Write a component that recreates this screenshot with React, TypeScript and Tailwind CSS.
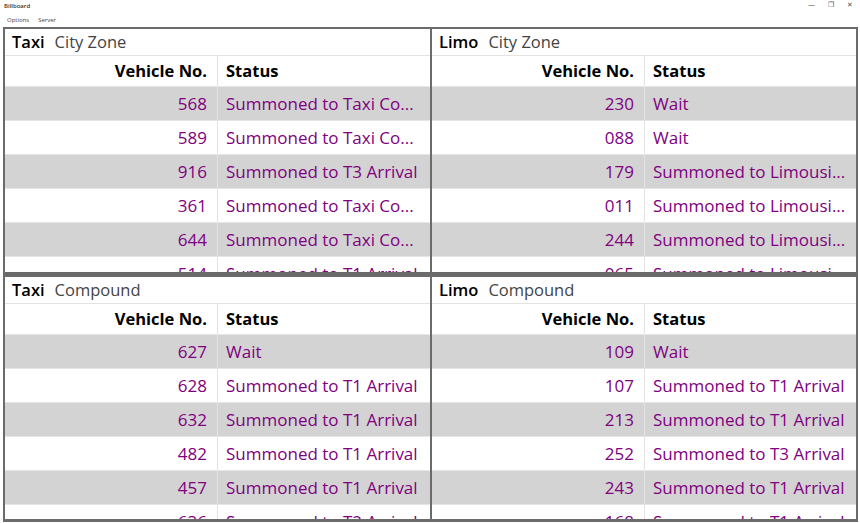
import React from 'react';

type Row = { no: string; status: string };

interface Board {
  kind: string;
  zone: string;
  rows: Row[];
}

const BOARDS: Board[] = [
  {
    kind: 'Taxi',
    zone: 'City Zone',
    rows: [
      { no: '568', status: 'Summoned to Taxi Co...' },
      { no: '589', status: 'Summoned to Taxi Co...' },
      { no: '916', status: 'Summoned to T3 Arrival' },
      { no: '361', status: 'Summoned to Taxi Co...' },
      { no: '644', status: 'Summoned to Taxi Co...' },
      { no: '514', status: 'Summoned to T1 Arrival' },
    ],
  },
  {
    kind: 'Limo',
    zone: 'City Zone',
    rows: [
      { no: '230', status: 'Wait' },
      { no: '088', status: 'Wait' },
      { no: '179', status: 'Summoned to Limousi...' },
      { no: '011', status: 'Summoned to Limousi...' },
      { no: '244', status: 'Summoned to Limousi...' },
      { no: '065', status: 'Summoned to Limousi...' },
    ],
  },
  {
    kind: 'Taxi',
    zone: 'Compound',
    rows: [
      { no: '627', status: 'Wait' },
      { no: '628', status: 'Summoned to T1 Arrival' },
      { no: '632', status: 'Summoned to T1 Arrival' },
      { no: '482', status: 'Summoned to T1 Arrival' },
      { no: '457', status: 'Summoned to T1 Arrival' },
      { no: '636', status: 'Summoned to T2 Arrival' },
    ],
  },
  {
    kind: 'Limo',
    zone: 'Compound',
    rows: [
      { no: '109', status: 'Wait' },
      { no: '107', status: 'Summoned to T1 Arrival' },
      { no: '213', status: 'Summoned to T1 Arrival' },
      { no: '252', status: 'Summoned to T3 Arrival' },
      { no: '243', status: 'Summoned to T1 Arrival' },
      { no: '168', status: 'Summoned to T1 Arrival' },
    ],
  },
];

export default function App() {
  return (
    <div className="w-[860px] h-[523px] bg-white overflow-hidden font-['Open_Sans',sans-serif] text-black">
      {/* window chrome */}
      <div className="h-[13px] flex items-start justify-between pl-[4px] pr-[7px]">
        <span className="text-[6px] leading-[10px] pt-[1px] font-semibold text-[#333]">Billboard</span>
        <div className="flex items-center gap-[13px] text-[7px] leading-[10px] text-[#555]">
          <span>—</span>
          <span>❐</span>
          <span>✕</span>
        </div>
      </div>
      <div className="h-[14px] flex items-center gap-[9px] pl-[7px] text-[6px] text-[#444]">
        <span>Options</span>
        <span>Server</span>
      </div>

      <div className="ml-[3px] w-[855px] h-[495px] bg-[#6b6b6b] p-[2px] pb-[3px] grid grid-cols-[425px_424px] grid-rows-[243px_242px] gap-x-[2px] gap-y-[5px]">
        {BOARDS.map((b, i) => (
          <Panel key={i} board={b} />
        ))}
      </div>
    </div>
  );
}

function Panel({ board }: { board: Board }) {
  return (
    <div className="bg-white overflow-hidden flex flex-col">
      <div className="h-[27px] shrink-0 flex items-center gap-[10px] pl-[7px] text-[16.5px] border-b border-[#e3e3e3]">
        <span className="font-semibold">{board.kind}</span>
        <span className="text-[#444]">{board.zone}</span>
      </div>
      <div className="h-[30px] shrink-0 grid grid-cols-[213px_1fr] text-[16.5px] font-bold">
        <div className="flex items-center justify-end pr-[10px] border-r border-[#e3e3e3]">Vehicle No.</div>
        <div className="flex items-center pl-[8px]">Status</div>
      </div>
      {board.rows.map((r, i) => (
        <div
          key={r.no}
          className={`h-[34px] shrink-0 grid grid-cols-[213px_1fr] text-[17px] text-[#800080] border-t border-[#e6e6e6] ${
            i % 2 === 0 ? 'bg-[#d3d3d3]' : 'bg-white'
          }`}
        >
          <div className="flex items-center justify-end pr-[10px] border-r border-[#e3e3e3]">{r.no}</div>
          <div className="flex items-center pl-[8px] whitespace-nowrap">{r.status}</div>
        </div>
      ))}
    </div>
  );
}
